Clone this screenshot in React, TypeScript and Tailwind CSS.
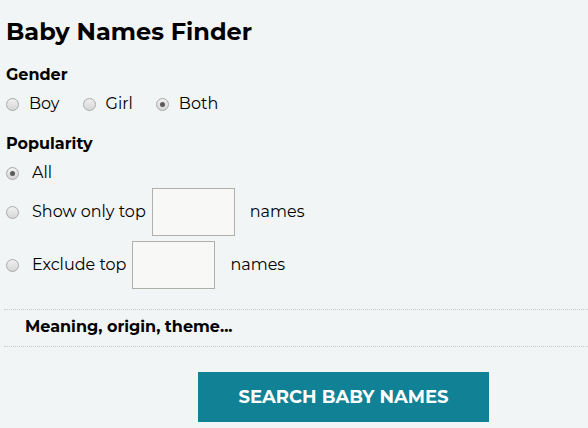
import React, { useState } from "react";

const FONT = "font-['Montserrat','Inter','Open_Sans',sans-serif]";

function Radio({ checked, onClick }: { checked: boolean; onClick?: () => void }) {
  return (
    <span
      onClick={onClick}
      className="inline-flex h-[13px] w-[13px] shrink-0 items-center justify-center rounded-full border border-[#a9a9a9] bg-gradient-to-b from-[#f0f0f0] to-[#d6d6d6]"
    >
      {checked && <span className="h-[5px] w-[5px] rounded-full bg-[#5a5a5a]" />}
    </span>
  );
}

export default function App() {
  const [gender, setGender] = useState("both");
  const [pop, setPop] = useState("all");

  return (
    <div className={`h-[428px] w-[588px] overflow-hidden bg-[#f2f5f6] text-black ${FONT}`}>
      <div className="pl-[6px] pt-[17px]">
        <h1 className="h-[30px] text-[24px] font-bold leading-[30px]">Baby Names Finder</h1>

        <div className="mt-[18px] h-[20px] text-[16px] font-bold leading-[20px]">Gender</div>
        <div className="mt-[8px] flex h-[22px] items-center text-[16px]">
          {[
            ["boy", "Boy"],
            ["girl", "Girl"],
            ["both", "Both"],
          ].map(([k, label]) => (
            <label key={k} className="mr-[23px] flex items-center gap-[10px]" onClick={() => setGender(k)}>
              <Radio checked={gender === k} />
              <span>{label}</span>
            </label>
          ))}
        </div>

        <div className="mt-[19px] h-[20px] text-[16px] font-bold leading-[20px]">Popularity</div>
        <div className="mt-[8px] flex h-[22px] items-center gap-[13px] text-[16px]" onClick={() => setPop("all")}>
          <Radio checked={pop === "all"} />
          <span>All</span>
        </div>

        <div className="mt-[4px] flex h-[48px] items-center text-[16px]" onClick={() => setPop("top")}>
          <Radio checked={pop === "top"} />
          <span className="ml-[13px]">Show only top</span>
          <input className="ml-[6px] h-[48px] w-[83px] border border-[#b0b0aa] bg-[#f8f8f6] outline-none" />
          <span className="ml-[15px]">names</span>
        </div>

        <div className="mt-[5px] flex h-[48px] items-center text-[16px]" onClick={() => setPop("exclude")}>
          <Radio checked={pop === "exclude"} />
          <span className="ml-[13px]">Exclude top</span>
          <input className="ml-[6px] h-[48px] w-[83px] border border-[#b0b0aa] bg-[#f8f8f6] outline-none" />
          <span className="ml-[15px]">names</span>
        </div>
      </div>

      <div className="ml-[4px] mt-[20px] border-y border-dotted border-[#c8cac4] pb-[9px] pl-[21px] pt-[7px] text-[16px] font-bold leading-[20px]">
        Meaning, origin, theme...
      </div>

      <div className="mt-[25px] flex">
        <button className="ml-[198px] h-[50px] w-[291px] bg-[#118196] text-[18px] font-bold uppercase text-white">
          Search baby names
        </button>
      </div>
    </div>
  );
}
